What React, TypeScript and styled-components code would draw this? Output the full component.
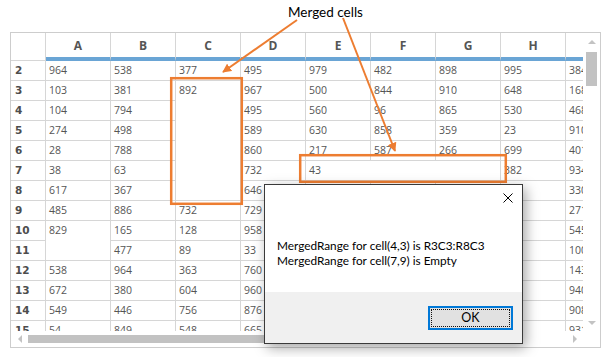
import React from "react";
import styled, { createGlobalStyle } from "styled-components";

const GlobalStyle = createGlobalStyle`
  html, body { margin: 0; padding: 0; background: #fff; }
  body { width: 615px; height: 357px; overflow: hidden; }
`;

const ORANGE = "#ed7d31";
const GRID = "#d6d6d6";
const COLS = ["A", "B", "C", "D", "E", "F", "G", "H", "I"];

type Cell = string | null;
const DATA: Cell[][] = [
  ["964", "538", "377", "495", "979", "482", "898", "995", "384"],
  ["103", "381", "892", "967", "500", "844", "910", "648", "168"],
  ["104", "794", null, "495", "560", "96", "865", "530", "468"],
  ["274", "498", null, "589", "630", "858", "359", "23", "910"],
  ["28", "788", null, "860", "217", "587", "266", "699", "401"],
  ["38", "63", null, "732", "43", null, null, "382", "934"],
  ["617", "367", null, "646", "", "", "", "", "330"],
  ["485", "886", "732", "729", "", "", "", "", "271"],
  ["829", "165", "128", "958", "", "", "", "", "545"],
  [null, "477", "89", "33", "", "", "", "", "100"],
  ["538", "964", "363", "760", "", "", "", "", "143"],
  ["672", "380", "604", "960", "", "", "", "", "940"],
  ["549", "446", "756", "876", "", "", "", "", "908"],
  ["54", "849", "548", "665", "", "", "", "", "931"],
];

const SPANS: Record<string, { r: number; c: number }> = {
  "3,2": { r: 6, c: 1 },
  "7,4": { r: 1, c: 3 },
  "10,0": { r: 2, c: 1 },
};

const Page = styled.div`
  position: relative;
  width: 615px;
  height: 357px;
  background: #fff;
`;

const LabelBar = styled.div`
  height: 32px;
  box-sizing: border-box;
  padding: 3px 0 0 288px;
  font-family: Lato, "Liberation Sans", sans-serif;
  font-size: 13.5px;
  line-height: 18px;
  color: #000;
`;

const Frame = styled.div`
  margin-left: 10px;
  width: 591px;
  height: 316px;
  box-sizing: border-box;
  border: 1px solid #cdcdcd;
  display: grid;
  grid-template-columns: 572px 17px;
  grid-template-rows: 298px 16px;
`;

const Viewport = styled.div`
  overflow: hidden;
`;

const Sheet = styled.div`
  display: grid;
  grid-template-columns: 35px repeat(9, 65px);
  grid-template-rows: 28px repeat(14, 20px);
  width: max-content;
`;

const Corner = styled.div`
  box-sizing: border-box;
  border-right: 1px solid ${GRID};
  border-bottom: 1px solid ${GRID};
`;

const ColHead = styled.div`
  box-sizing: border-box;
  border-right: 1px solid ${GRID};
  border-bottom: 4px solid #6aa5d5;
  display: flex;
  align-items: center;
  justify-content: center;
  font-family: "Open Sans", "DejaVu Sans", sans-serif;
  font-weight: 700;
  font-size: 12px;
  color: #555;
`;

const RowHead = styled.div`
  box-sizing: border-box;
  border-right: 1px solid ${GRID};
  border-bottom: 1px solid ${GRID};
  padding-left: 4px;
  font-family: "DejaVu Sans", sans-serif;
  font-weight: 700;
  font-size: 10.5px;
  line-height: 19px;
  color: #4d4d4d;
`;

const DataCell = styled.div<{ $r: number; $c: number }>`
  grid-row: span ${(p) => p.$r};
  grid-column: span ${(p) => p.$c};
  box-sizing: border-box;
  border-right: 1px solid ${GRID};
  border-bottom: 1px solid ${GRID};
  padding-left: 3px;
  font-family: "Open Sans", sans-serif;
  font-size: 10.5px;
  line-height: 18px;
  color: #555;
  white-space: nowrap;
  overflow: hidden;
  background: #fff;
`;

const VScroll = styled.div`
  display: flex;
  flex-direction: column;
  align-items: center;
`;

const HScroll = styled.div`
  display: flex;
  align-items: center;
`;

const ArrowBox = styled.div`
  width: 17px;
  height: 17px;
  flex: none;
  display: flex;
  align-items: center;
  justify-content: center;
`;

const Tri = styled.div<{ $dir: "up" | "down" | "left" | "right" }>`
  width: 0;
  height: 0;
  ${(p) =>
    p.$dir === "up"
      ? `border-left: 4px solid transparent; border-right: 4px solid transparent; border-bottom: 4px solid #c3c3c3;`
      : p.$dir === "down"
      ? `border-left: 4px solid transparent; border-right: 4px solid transparent; border-top: 4px solid #c3c3c3;`
      : p.$dir === "left"
      ? `border-top: 4px solid transparent; border-bottom: 4px solid transparent; border-right: 4px solid #c3c3c3;`
      : `border-top: 4px solid transparent; border-bottom: 4px solid transparent; border-left: 4px solid #c3c3c3;`}
`;

const VThumb = styled.div`
  width: 11px;
  height: 34px;
  margin-top: 2px;
  background: #c2c2c2;
`;

const HThumb = styled.div`
  width: 430px;
  height: 8px;
  background: #c2c2c2;
`;

const Spacer = styled.div`
  flex: 1;
`;

const Overlay = styled.svg`
  position: absolute;
  left: 0;
  top: 0;
  pointer-events: none;
`;

const Dialog = styled.div`
  position: absolute;
  left: 264px;
  top: 184px;
  width: 259px;
  height: 160px;
  box-sizing: border-box;
  border: 1px solid #3a3a3a;
  background: #fff;
  box-shadow: 3px 4px 12px rgba(0, 0, 0, 0.35);
  display: flex;
  flex-direction: column;
  font-family: Lato, "Liberation Sans", sans-serif;
  font-size: 11.8px;
  color: #000;
`;

const DialogBody = styled.div`
  height: 107px;
  flex: none;
`;

const TitleRow = styled.div`
  height: 26px;
  display: flex;
  justify-content: flex-end;
  align-items: center;
  padding-right: 9px;
`;

const Message = styled.div`
  padding: 27px 0 0 12px;
  line-height: 15px;
`;

const Footer = styled.div`
  flex: 1;
  background: #f0f0f0;
  display: flex;
  justify-content: flex-end;
  align-items: center;
  padding-right: 9px;
`;

const OkButton = styled.button`
  width: 85px;
  height: 24px;
  box-sizing: border-box;
  border: 1px solid #0078d7;
  box-shadow: inset 0 0 0 1px #0078d7;
  background: #e1e1e1;
  outline: 1px dotted #111;
  outline-offset: -4px;
  font-family: Lato, "Liberation Sans", sans-serif;
  font-size: 12.5px;
  color: #000;
  padding: 0;
`;

export default function App() {
  return (
    <Page>
      <GlobalStyle />
      <LabelBar>Merged cells</LabelBar>
      <Frame>
        <Viewport>
          <Sheet>
            <Corner />
            {COLS.map((c) => (
              <ColHead key={c}>{c}</ColHead>
            ))}
            {DATA.map((row, ri) => {
              const rn = ri + 2;
              return (
                <React.Fragment key={rn}>
                  <RowHead>{rn}</RowHead>
                  {row.map((v, ci) => {
                    if (v === null) return null;
                    const s = SPANS[`${rn},${ci}`] || { r: 1, c: 1 };
                    return (
                      <DataCell key={ci} $r={s.r} $c={s.c}>
                        {v}
                      </DataCell>
                    );
                  })}
                </React.Fragment>
              );
            })}
          </Sheet>
        </Viewport>
        <VScroll>
          <ArrowBox>
            <Tri $dir="up" />
          </ArrowBox>
          <VThumb />
          <Spacer />
          <ArrowBox>
            <Tri $dir="down" />
          </ArrowBox>
        </VScroll>
        <HScroll>
          <ArrowBox>
            <Tri $dir="left" />
          </ArrowBox>
          <HThumb />
          <Spacer />
          <ArrowBox>
            <Tri $dir="right" />
          </ArrowBox>
        </HScroll>
        <div />
      </Frame>

      <Overlay width={615} height={357} viewBox="0 0 615 357">
        <defs>
          <marker id="ah" viewBox="0 0 10 10" refX="9" refY="5" markerWidth="4.5" markerHeight="4.5" orient="auto">
            <path d="M0 0 L10 5 L0 10 z" fill={ORANGE} />
          </marker>
        </defs>
        <line x1={297} y1={20} x2={223} y2={72} stroke={ORANGE} strokeWidth={2} markerEnd="url(#ah)" />
        <line x1={343} y1={18} x2={395} y2={151} stroke={ORANGE} strokeWidth={2} markerEnd="url(#ah)" />
        <rect x={171.2} y={78.2} width={70.6} height={125.6} fill="none" stroke={ORANGE} strokeWidth={2.5} />
        <rect x={300.2} y={155.2} width={205.6} height={26.6} fill="none" stroke={ORANGE} strokeWidth={2.5} />
      </Overlay>

      <Dialog>
        <DialogBody>
          <TitleRow>
            <svg width="10" height="10" viewBox="0 0 10 10">
              <path d="M0.5 0.5 L9.5 9.5 M9.5 0.5 L0.5 9.5" stroke="#000" strokeWidth="1" />
            </svg>
          </TitleRow>
          <Message>
            MergedRange for cell(4,3) is R3C3:R8C3
            <br />
            MergedRange for cell(7,9) is Empty
          </Message>
        </DialogBody>
        <Footer>
          <OkButton>OK</OkButton>
        </Footer>
      </Dialog>
    </Page>
  );
}
